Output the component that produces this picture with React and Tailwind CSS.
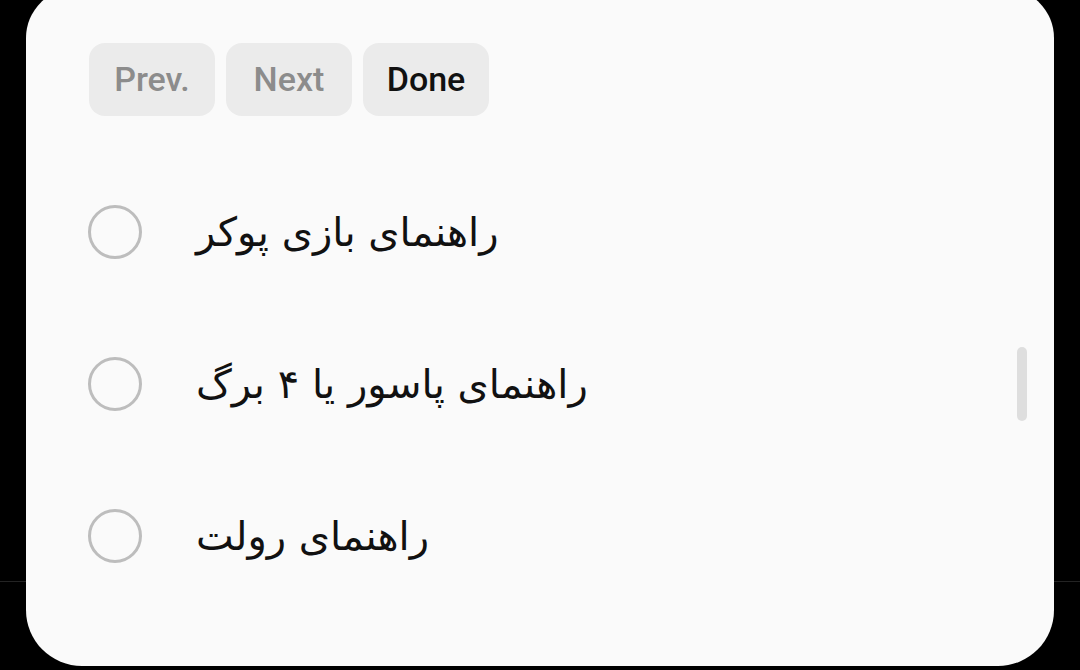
import React from 'react'

const options = [
  'راهنمای بازی پوکر',
  'راهنمای پاسور یا ۴ برگ',
  'راهنمای رولت',
]

function NavButton({ label, active }) {
  return (
    <button
      className={`w-[126px] h-[73px] rounded-[16px] bg-[#ebebeb] text-[34px] font-medium ${
        active ? 'text-[#111111]' : 'text-[#8c8c8c]'
      }`}
      style={{ fontFamily: 'Roboto, "Liberation Sans", sans-serif' }}
    >
      {label}
    </button>
  )
}

export default function App() {
  return (
    <div className="relative w-[1080px] h-[670px] bg-black overflow-hidden">
      {/* faint divider behind the sheet */}
      <div className="absolute left-0 right-0 top-[581px] h-px bg-[#232323]" />

      <div className="relative mx-[26px] mt-[-12px] h-[678px] rounded-t-[50px] rounded-b-[56px] bg-[#fafafa] pt-[55px]">
        <div className="flex gap-[11px] pl-[63px]">
          <NavButton label="Prev." />
          <NavButton label="Next" />
          <NavButton label="Done" active />
        </div>

        <div className="mt-[40px]">
          {options.map((opt) => (
            <div key={opt} className="flex items-center h-[152px] pl-[62px]">
              <div className="w-[54px] h-[54px] rounded-full border-[3px] border-[#bdbdbd] shrink-0" />
              <span
                dir="rtl"
                className="ml-[54px] text-[40px] text-[#111111]"
                style={{ fontFamily: '"DejaVu Sans", "Noto Sans", sans-serif' }}
              >
                {opt}
              </span>
            </div>
          ))}
        </div>

        {/* scroll indicator */}
        <div className="absolute left-[991px] top-[359px] w-[10px] h-[74px] rounded-full bg-[#dedede]" />
      </div>
    </div>
  )
}
